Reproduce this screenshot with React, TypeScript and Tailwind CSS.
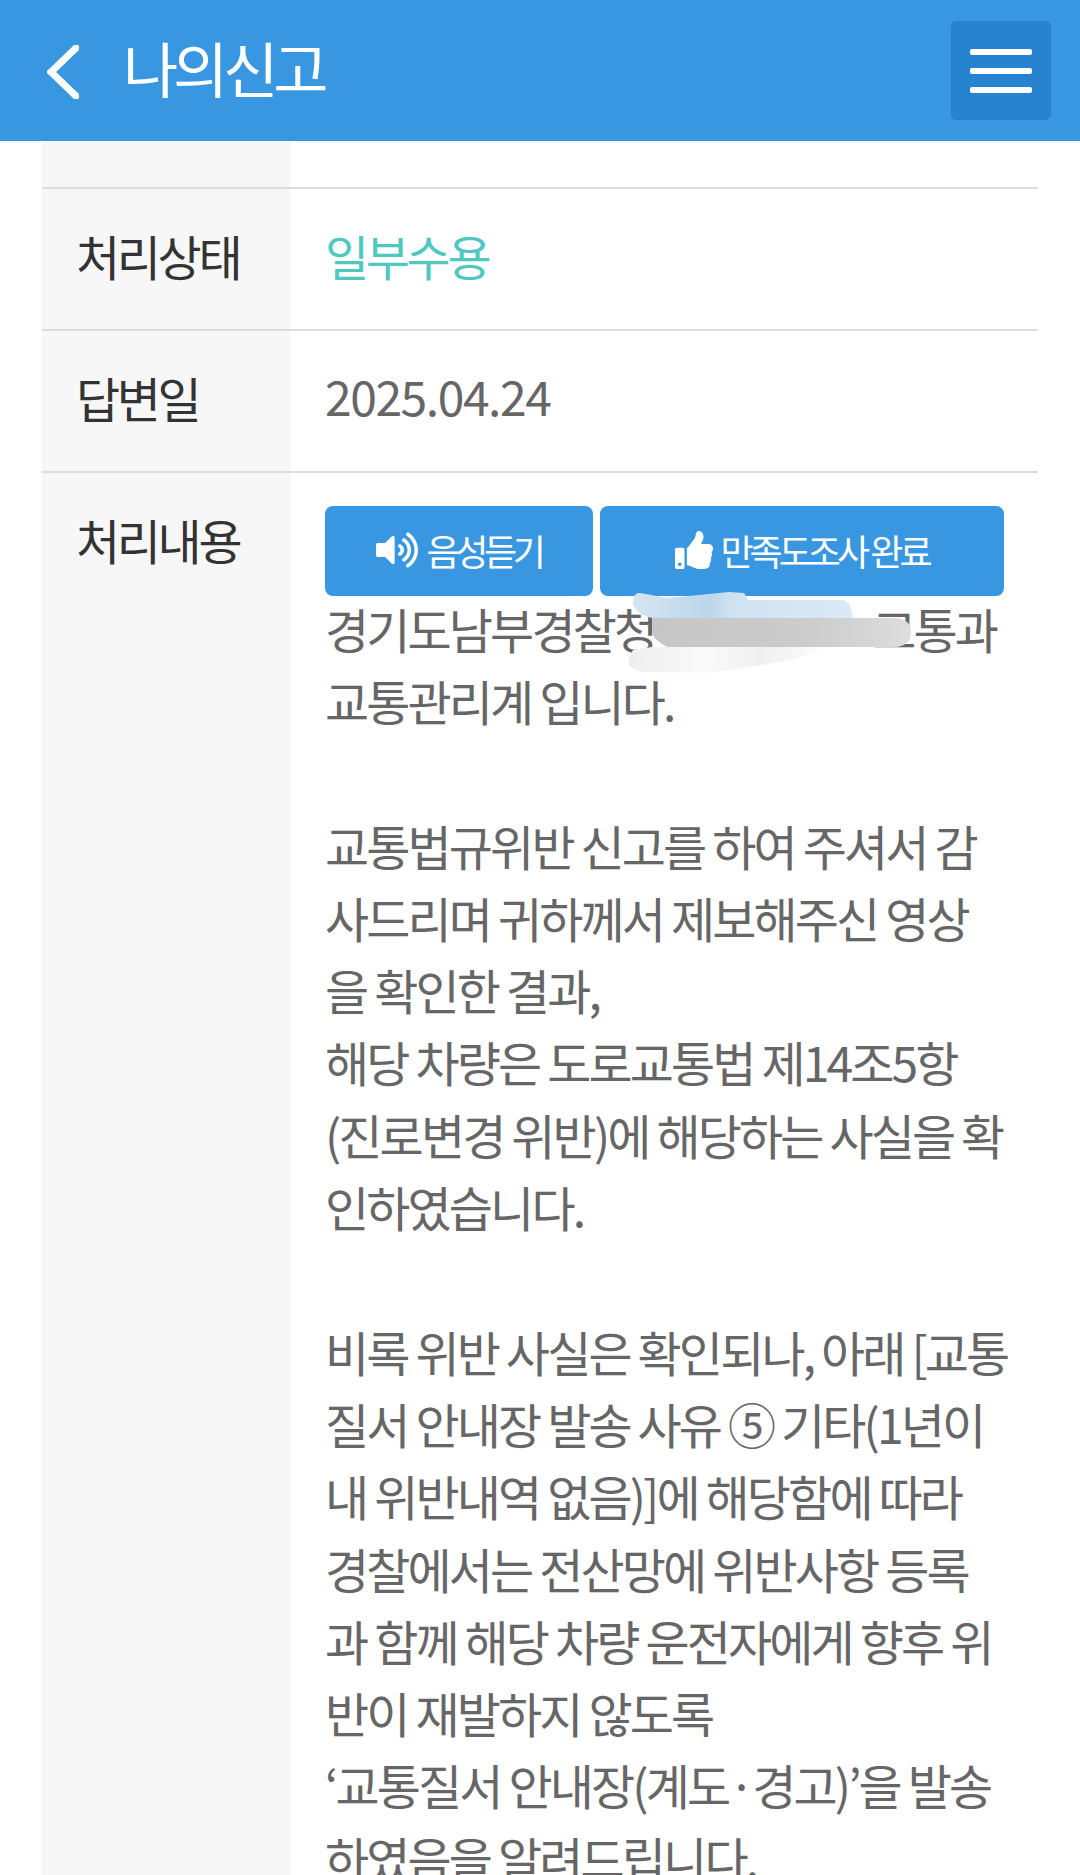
import React from "react";
import { FaThumbsUp, FaVolumeUp } from "react-icons/fa";

const lines = [
  "교통관리계 입니다.",
  "",
  "교통법규위반 신고를 하여 주셔서 감",
  "사드리며 귀하께서 제보해주신 영상",
  "을 확인한 결과,",
  "해당 차량은 도로교통법 제14조5항",
  "(진로변경 위반)에 해당하는 사실을 확",
  "인하였습니다.",
  "",
  "비록 위반 사실은 확인되나, 아래 [교통",
  "질서 안내장 발송 사유 ⑤ 기타(1년이",
  "내 위반내역 없음)]에 해당함에 따라",
  "경찰에서는 전산망에 위반사항 등록",
  "과 함께 해당 차량 운전자에게 향후 위",
  "반이 재발하지 않도록",
  "‘교통질서 안내장(계도·경고)’을 발송",
  "하였음을 알려드립니다.",
];

function Row({ label, children }: { label?: string; children?: React.ReactNode }) {
  return (
    <div className="flex border-b-2 border-[#dcdcdc]">
      <div className="w-[249px] shrink-0 bg-[#f7f7f7] pl-[34px] pt-[30px] pb-[38px] tracking-[-0.07em] text-[#333]">{label}</div>
      <div className="flex-1 pl-[34px] pt-[30px] pb-[38px]">{children}</div>
    </div>
  );
}

function Redaction() {
  return (
    <svg width="290" height="86" viewBox="0 0 290 86" className="absolute left-[337px] top-[117px]">
      <defs>
        <linearGradient id="blue" x1="0" x2="1" y1="0" y2="0">
          <stop offset="0" stopColor="#d5e5f2" />
          <stop offset="0.35" stopColor="#bcd6ec" />
          <stop offset="0.45" stopColor="#cfe2f2" />
          <stop offset="1" stopColor="#dbe9f5" />
        </linearGradient>
        <linearGradient id="gray" x1="0" x2="1" y1="0" y2="0">
          <stop offset="0" stopColor="#c6c6c6" />
          <stop offset="0.6" stopColor="#cccccc" />
          <stop offset="0.8" stopColor="#d4d4d4" />
          <stop offset="1" stopColor="#dedede" />
        </linearGradient>
        <linearGradient id="pale" x1="0" x2="1" y1="0" y2="0">
          <stop offset="0" stopColor="#eeeeee" />
          <stop offset="0.4" stopColor="#fafafa" />
          <stop offset="0.7" stopColor="#f0f0f0" />
          <stop offset="1" stopColor="#fbfbfb" />
        </linearGradient>
      </defs>
      <path d="M5,14 Q5,2 12,3 L40,8 L101,2 L116,3 L120,10 L215,10 Q224,12 224,28 L24,28 Q8,24 5,14Z" fill="url(#blue)" />
      <path d="M24,28 L269,28 Q283,30 283,42 Q283,55 269,57 L40,57 Q24,50 24,40Z" fill="url(#gray)" />
      <path d="M5,60 L24,57 L191,57 L191,60 L163,70 L104,80 L75,83 L19,82 Q0,80 0,70Z" fill="url(#pale)" />
    </svg>
  );
}

export default function App() {
  return (
    <div className="h-[1875px] w-[1080px] overflow-hidden bg-white font-['Noto_Sans_CJK_KR','Noto_Sans',sans-serif] text-[48px] leading-[72px] tracking-[-0.06em] font-normal">
      <header className="flex h-[141px] items-center justify-between bg-[#3997e1] pl-[47px] pr-[29px]">
        <div className="flex items-center gap-[44px]">
          <svg width="32" height="54" viewBox="0 0 32 54" fill="none" className="mt-[2px]">
            <path d="M29 3 L4 27 L29 51" stroke="white" strokeWidth="7" strokeLinecap="round" strokeLinejoin="miter" />
          </svg>
          <h1 className="-mt-[8px] text-[60px] leading-[70px] font-normal text-white tracking-[-0.085em]">나의신고</h1>
        </div>
        <button className="flex h-[99px] w-[100px] flex-col items-center justify-center gap-[13px] rounded-[5px] border border-[#2a7fc6] bg-[#2783d0]">
          <span className="h-[6px] w-[62px] rounded-[2px] bg-white" />
          <span className="h-[6px] w-[62px] rounded-[2px] bg-white" />
          <span className="h-[6px] w-[62px] rounded-[2px] bg-white" />
        </button>
      </header>

      <main className="mx-[42px]">
        <div className="flex h-[48px] border-b-2 border-[#dcdcdc]">
          <div className="w-[249px] bg-[#f7f7f7]" />
        </div>
        <Row label="처리상태">
          <span className="tracking-[-0.07em] text-[#4fc8bf]">일부수용</span>
        </Row>
        <Row label="답변일">
          <span className="relative -top-[2px] tracking-[-0.03em] text-[#666]">2025.04.24</span>
        </Row>
        <div className="flex">
          <div className="w-[249px] shrink-0 bg-[#f7f7f7] pl-[34px] pt-[30px] tracking-[-0.07em] text-[#333]">처리내용</div>
          <div className="relative flex-1 pl-[34px] pt-[33px] text-[#666] whitespace-nowrap">
            <div className="flex gap-[7px] text-white">
              <div className="flex h-[90px] w-[268px] items-center justify-center gap-[8px] rounded-[8px] bg-[#3997e1] pb-[3px] text-[36px] tracking-[-0.12em]">
                <FaVolumeUp className="size-[42px]" />
                <span>음성듣기</span>
              </div>
              <div className="flex h-[90px] w-[404px] items-center justify-center gap-[7px] rounded-[8px] bg-[#3997e1] pb-[3px] text-[36px] tracking-[-0.11em]">
                <FaThumbsUp className="size-[38px]" />
                <span>만족도조사 완료</span>
              </div>
            </div>
            <div className="-mt-[4px] flex">
              <span>경기도남부경찰청</span>
              <span className="ml-[217px]">교통과</span>
            </div>
            {lines.map((l, i) => (
              <div key={i} className="h-[72.3px]">{l}</div>
            ))}
            <Redaction />
          </div>
        </div>
      </main>
    </div>
  );
}
